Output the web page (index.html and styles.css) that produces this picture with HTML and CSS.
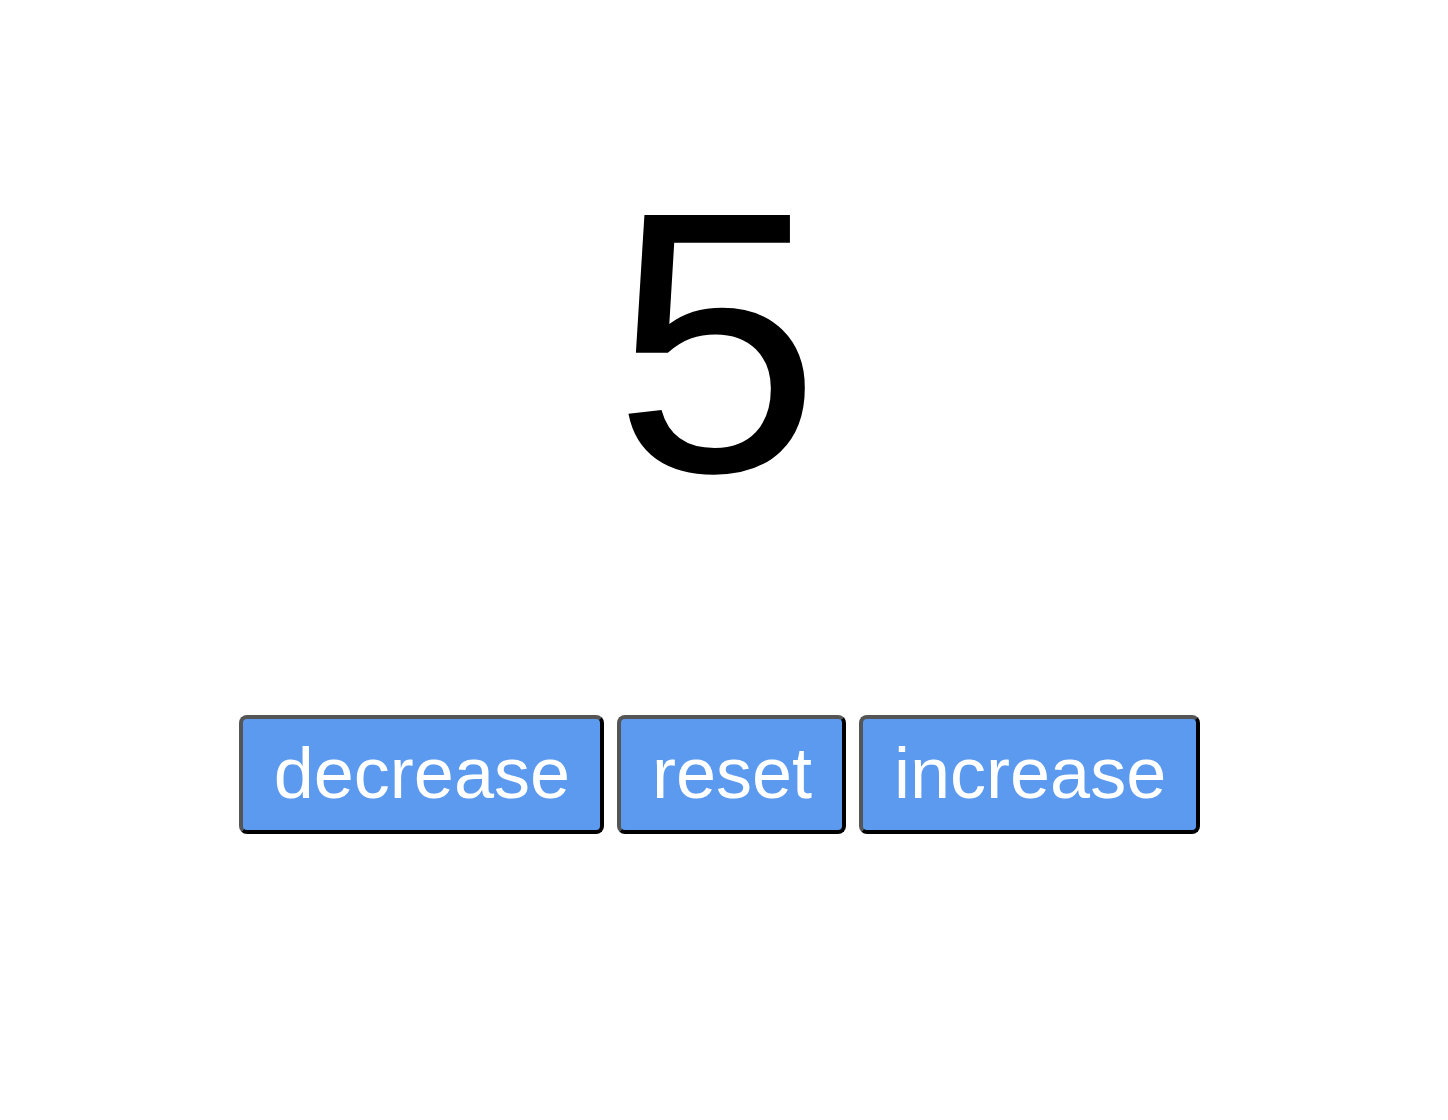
FILE: index.html
```html
<!DOCTYPE html>
<html>
<head>
<meta charset="utf-8">
<link rel="stylesheet" href="styles.css">
</head>
<body>
<main class="counter">
  <div class="count">5</div>
  <div class="controls">
    <button class="btn">decrease</button>
    <button class="btn">reset</button>
    <button class="btn">increase</button>
  </div>
</main>
</body>
</html>
```
FILE: styles.css
```css
html, body {
  margin: 0;
  padding: 0;
  background: #ffffff;
}
.counter {
  display: flex;
  flex-direction: column;
  align-items: center;
  padding-top: 156px;
  padding-right: 9px;
  font-family: "Liberation Sans", Arial, sans-serif;
}
.count {
  font-size: 372px;
  line-height: 1;
  color: #000;
  margin-right: 5px;
}
.controls {
  display: flex;
  gap: 13px;
  margin-top: 187px;
}
.btn {
  font-family: "Liberation Sans", Arial, sans-serif;
  font-size: 72px;
  line-height: 1.15;
  color: #ffffff;
  background: #5b9aee;
  border: 4px solid #555;
  border-color: #555 #000 #000 #555;
  border-radius: 8px;
  padding: 13px 30px 15px 31px;
}
```
